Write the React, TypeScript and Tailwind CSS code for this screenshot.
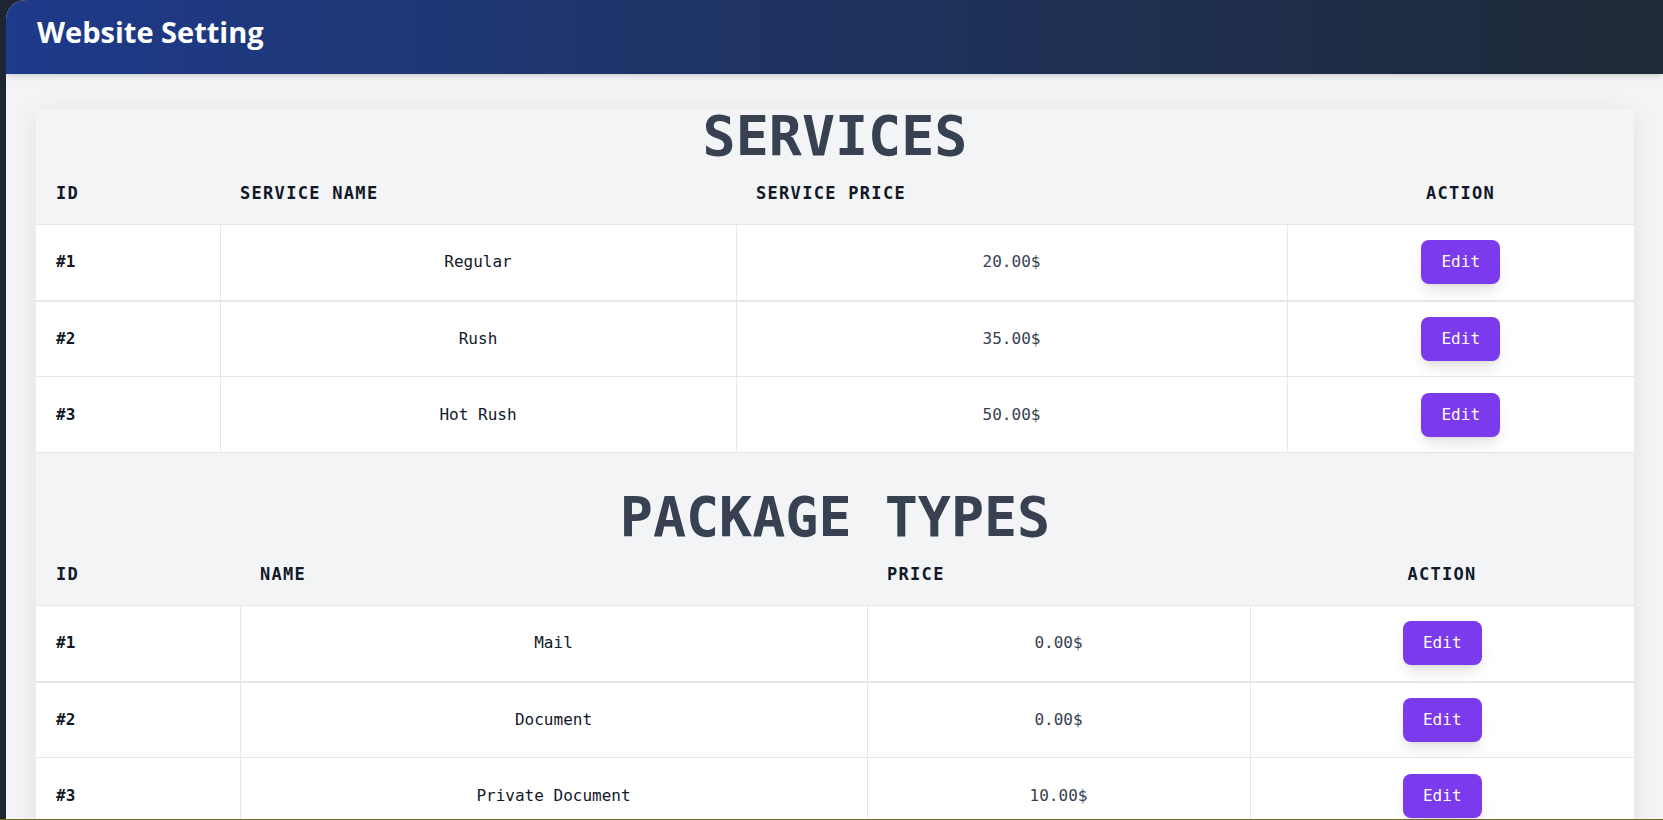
import React from "react";

type Row = { id: number; name: string; price: string };

const services: Row[] = [
  { id: 1, name: "Regular", price: "20.00$" },
  { id: 2, name: "Rush", price: "35.00$" },
  { id: 3, name: "Hot Rush", price: "50.00$" },
];

const packages: Row[] = [
  { id: 1, name: "Mail", price: "0.00$" },
  { id: 2, name: "Document", price: "0.00$" },
  { id: 3, name: "Private Document", price: "10.00$" },
];

const mono = "font-['DejaVu_Sans_Mono','Liberation_Mono',monospace]";

function EditButton() {
  return (
    <button className="h-11 px-5 rounded-lg bg-[#7c3aed] text-white text-base leading-6 shadow-lg hover:bg-[#6d28d9] transition-colors">
      Edit
    </button>
  );
}

function SettingTable({
  title,
  nameLabel,
  priceLabel,
  cols,
  rows,
}: {
  title: string;
  nameLabel: string;
  priceLabel: string;
  cols: string[];
  rows: Row[];
}) {
  return (
    <section>
      <h2 className="text-[55px] leading-none font-bold text-[#374151] text-center">{title}</h2>
      <table className="w-full table-fixed">
        <colgroup>
          {cols.map((c, i) => (
            <col key={i} className={c} />
          ))}
        </colgroup>
        <thead>
          <tr className="border-b border-[#e5e7eb] text-[17px] leading-6 tracking-[1.3px] font-bold text-[#111827]">
            <th className="pl-5 pt-[17px] pb-[19px] text-left">ID</th>
            <th className="pl-5 pt-[17px] pb-[19px] text-left">{nameLabel}</th>
            <th className="pl-5 pt-[17px] pb-[19px] text-left">{priceLabel}</th>
            <th className="pt-[17px] pb-[19px] text-center">ACTION</th>
          </tr>
        </thead>
        <tbody className="bg-white text-base leading-6">
          {rows.map((r, i) => (
            <tr key={r.id} className={i === 0 ? "border-b-2 border-[#e5e7eb]" : "border-b border-[#e5e7eb]"}>
              <td className="h-[76px] pl-5 font-bold text-[#111827] border-r border-[#e5e7eb]">#{r.id}</td>
              <td className="h-[76px] text-center text-[#111827] border-r border-[#e5e7eb]">{r.name}</td>
              <td className="h-[76px] text-center text-[#374151] border-r border-[#e5e7eb]">{r.price}</td>
              <td className="h-[76px] text-center">
                <EditButton />
              </td>
            </tr>
          ))}
        </tbody>
      </table>
    </section>
  );
}

export default function App() {
  return (
    <div className="h-screen overflow-hidden bg-[#1f2633] pl-[6px]">
      <div className="h-full rounded-tl-[20px] bg-[#f3f4f6] overflow-hidden">
        <header className="relative z-10 h-[74px] pl-[31px] pt-[14px] bg-linear-to-r from-[#1e3a8a] to-[#1f2937] shadow-md">
          <h1 className="font-['Open_Sans',sans-serif] text-[29px] leading-9 font-bold text-white">Website Setting</h1>
        </header>
        <main className={`pt-[35px] pl-[30px] pr-[29px] ${mono}`}>
          <div className="flex flex-col gap-[37px] bg-[#f3f4f6] shadow-[0_4px_24px_rgba(0,0,0,0.08)]">
            <SettingTable
              title="SERVICES"
              nameLabel="SERVICE NAME"
              priceLabel="SERVICE PRICE"
              cols={["w-[184px]", "w-[516px]", "w-[551px]", "w-[347px]"]}
              rows={services}
            />
            <SettingTable
              title="PACKAGE TYPES"
              nameLabel="NAME"
              priceLabel="PRICE"
              cols={["w-[204px]", "w-[627px]", "w-[383px]", "w-[384px]"]}
              rows={packages}
            />
          </div>
        </main>
      </div>
      <div className="pointer-events-none fixed inset-x-0 bottom-0 h-px bg-[#6e6b2a]" />
    </div>
  );
}
